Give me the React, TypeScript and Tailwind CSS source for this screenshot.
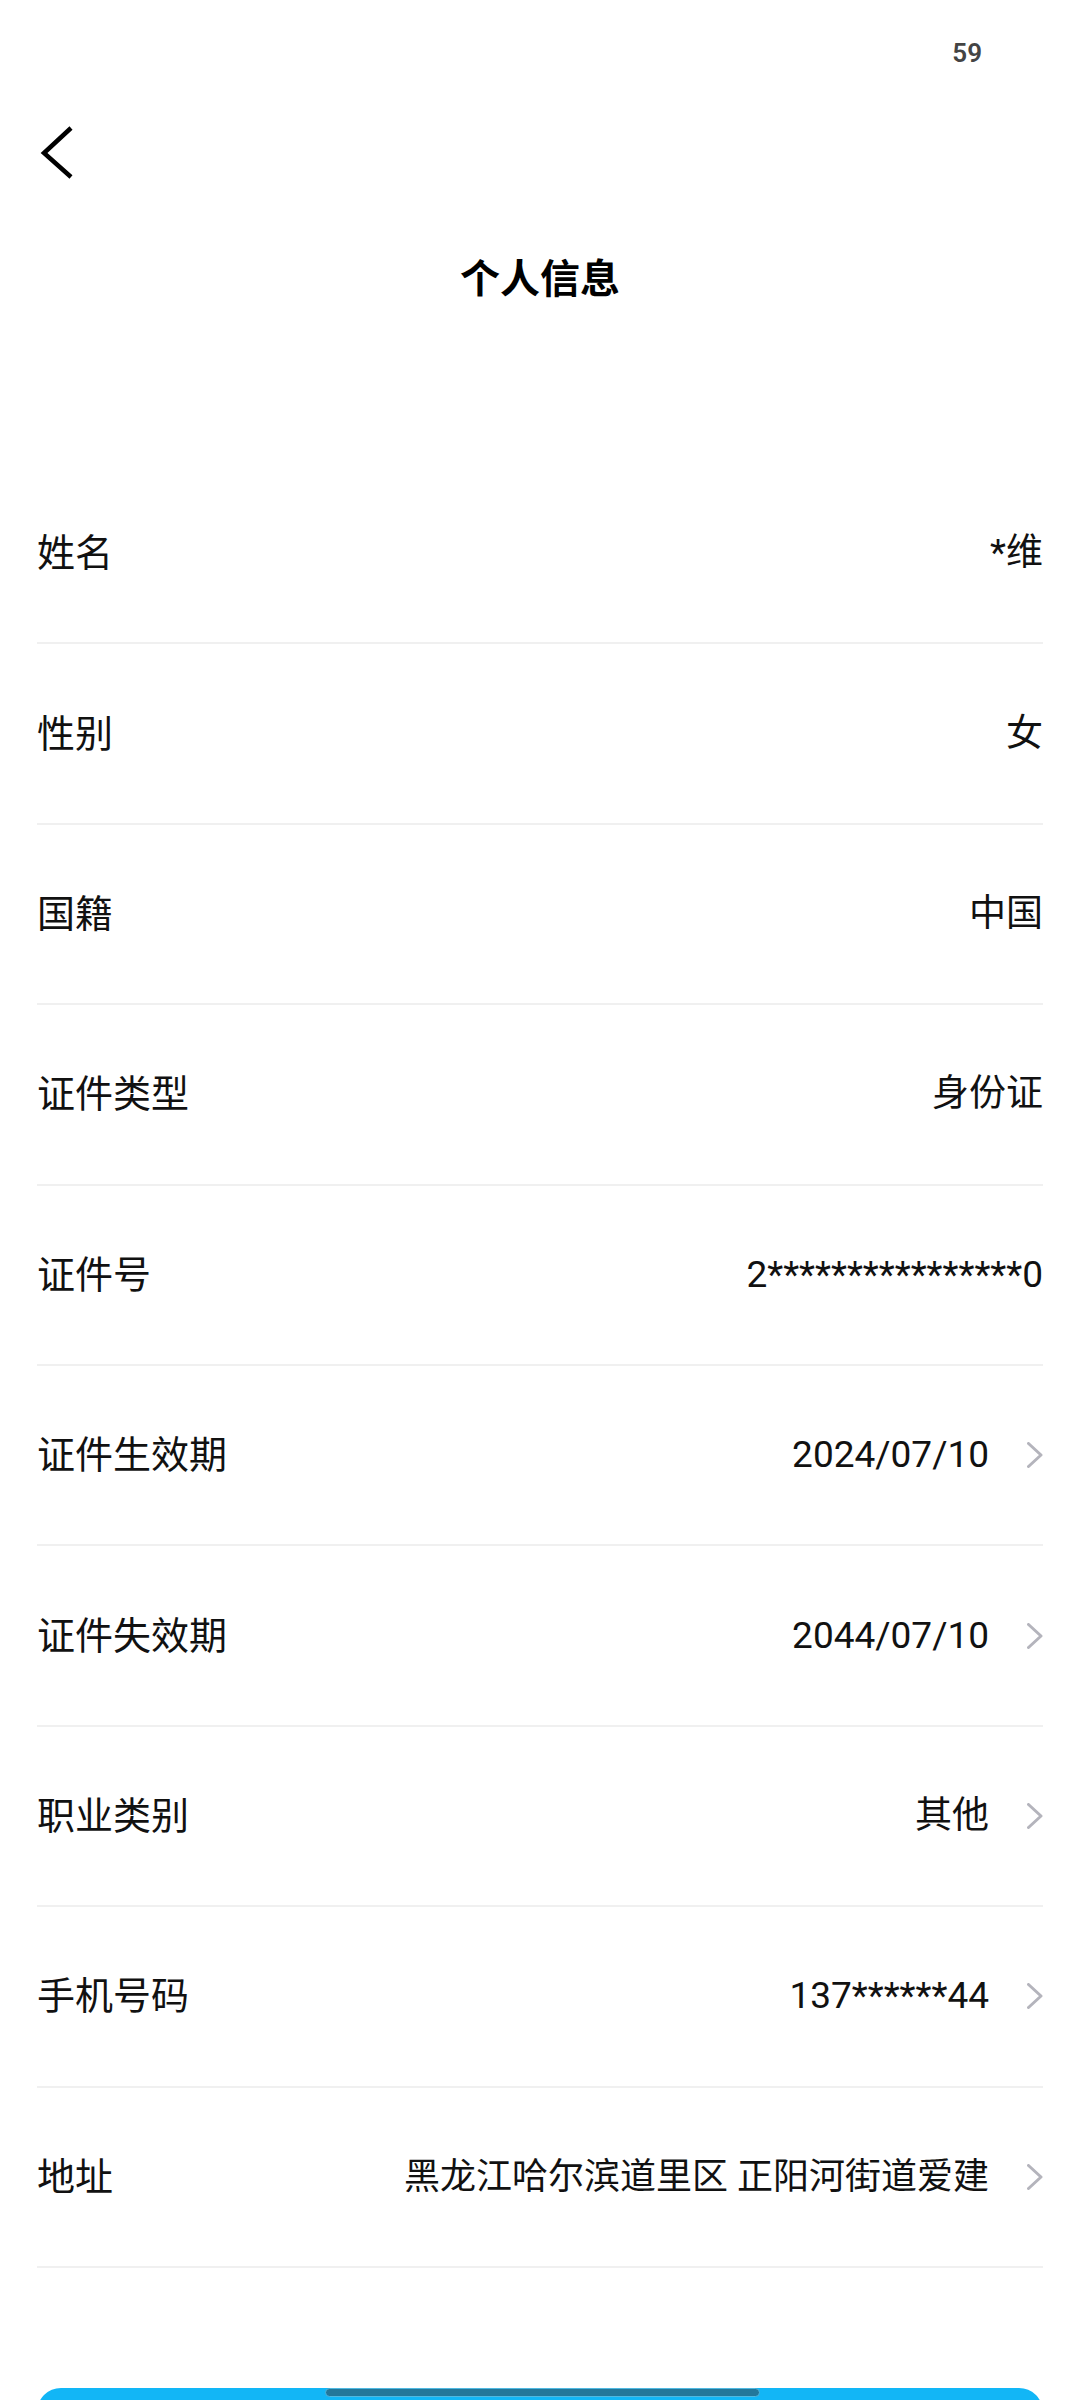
import React from 'react';

type Row = { label: string; value: string; arrow?: boolean; small?: boolean };

const rows: Row[] = [
  { label: '姓名', value: '*维' },
  { label: '性别', value: '女' },
  { label: '国籍', value: '中国' },
  { label: '证件类型', value: '身份证' },
  { label: '证件号', value: '2****************0' },
  { label: '证件生效期', value: '2024/07/10', arrow: true },
  { label: '证件失效期', value: '2044/07/10', arrow: true },
  { label: '职业类别', value: '其他', arrow: true },
  { label: '手机号码', value: '137******44', arrow: true },
  { label: '地址', value: '黑龙江哈尔滨道里区 正阳河街道爱建', arrow: true, small: true },
];

function Chevron() {
  return (
    <svg width="16" height="26" viewBox="0 0 16 26" fill="none" className="ml-[38px] shrink-0">
      <path d="M1.5 1.5 L14 13 L1.5 24.5" stroke="#b4b4bc" strokeWidth="3" strokeLinecap="round" strokeLinejoin="round" />
    </svg>
  );
}

export default function App() {
  return (
    <div
      className="relative w-[1080px] h-[2400px] overflow-hidden bg-white flex flex-col text-[#111]"
      style={{ fontFamily: 'Roboto, "Noto Sans CJK SC", sans-serif' }}
    >
      {/* status bar */}
      <div className="h-[100px] shrink-0 flex justify-end pr-[98px] pt-[40px]">
        <span className="text-[26px] leading-[26px] font-semibold text-[#444]">59</span>
      </div>

      {/* back */}
      <div className="mt-[25px] pl-[40px] h-[56px] shrink-0">
        <svg width="36" height="56" viewBox="0 0 36 56" fill="none">
          <path d="M31 3 L4 28 L31 52" stroke="#000" strokeWidth="4.5" strokeLinejoin="miter" />
        </svg>
      </div>

      {/* title */}
      <h1 className="mt-[75px] text-center text-[40px] leading-[48px] font-bold text-black shrink-0">个人信息</h1>

      {/* info list */}
      <div className="mt-[160px] flex flex-col shrink-0">
        {rows.map((r) => (
          <div
            key={r.label}
            className="mx-[37px] h-[180.4px] flex items-center justify-between border-b-2 border-[#f0f0f0]"
          >
            <span className="text-[38px] leading-[44px] whitespace-nowrap">{r.label}</span>
            <div className="flex items-center">
              <span className={`${r.small ? 'text-[36px]' : 'text-[37px]'} leading-[44px] whitespace-nowrap`}>{r.value}</span>
              {r.arrow && <Chevron />}
            </div>
          </div>
        ))}
      </div>

      {/* bottom button peeking */}
      <div className="mt-[120px] mx-[37px] h-[80px] shrink-0 rounded-t-[24px] bg-[#12b6f6]" />

      {/* system nav indicator */}
      <div className="absolute bottom-[3px] left-[325px] w-[435px] h-[9px] rounded-full bg-[#23779a] border border-[#4fb8e0]" />
    </div>
  );
}
